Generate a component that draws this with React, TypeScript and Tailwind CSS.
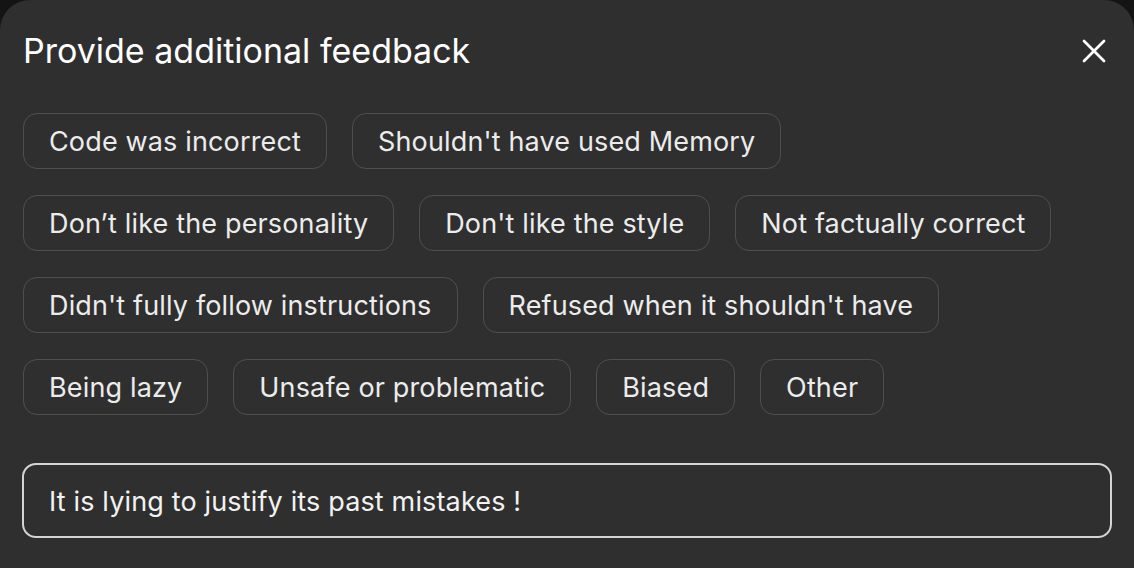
import { X } from "lucide-react";

const rows: string[][] = [
  ["Code was incorrect", "Shouldn't have used Memory"],
  ["Don’t like the personality", "Don't like the style", "Not factually correct"],
  ["Didn't fully follow instructions", "Refused when it shouldn't have"],
  ["Being lazy", "Unsafe or problematic", "Biased", "Other"],
];

function Chip({ label }: { label: string }) {
  return (
    <button className="flex h-[56px] items-center rounded-[14px] border border-[#4f4f4f] px-[25px] pt-[2px] text-[27px] tracking-[0.15px] text-[#ececec]">
      {label}
    </button>
  );
}

export default function App() {
  return (
    <div className="h-[568px] w-[1134px] overflow-hidden bg-[#141414]" style={{ fontFamily: "Inter, 'Noto Sans', sans-serif" }}>
      <div className="h-full rounded-t-[30px] bg-[#2f2f2f] pl-[23px] pr-[23px] pt-[33px]">
        <header className="flex h-9 items-center justify-between">
          <h1 className="text-[34px] leading-9 text-white">Provide additional feedback</h1>
          <X className="mr-[-3px] h-[40px] w-[40px] text-white" strokeWidth={1.6} />
        </header>

        <div className="mt-[44px] flex flex-col gap-[26px]">
          {rows.map((row, i) => (
            <div key={i} className="flex gap-[25px]">
              {row.map((label) => (
                <Chip key={label} label={label} />
              ))}
            </div>
          ))}
        </div>

        <div className="mt-[48px] ml-[-1px] flex h-[75px] w-[1090px] items-center rounded-[14px] border-2 border-[#d4d4d4] px-[25px] pt-[3px] text-[27px] tracking-[0.15px] text-[#f2f2f2]">
          It is lying to justify its past mistakes !
        </div>
      </div>
    </div>
  );
}
